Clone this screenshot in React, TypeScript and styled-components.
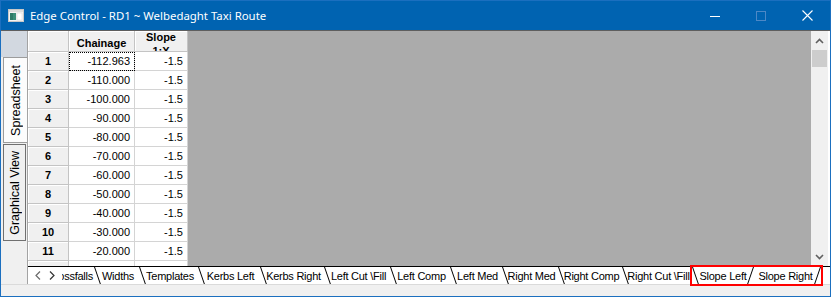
import React from 'react';
import styled, { createGlobalStyle, css } from 'styled-components';

const GlobalStyle = createGlobalStyle`
  html, body {
    margin: 0;
    padding: 0;
    background: #ffffff;
  }
  body {
    font-family: "Liberation Sans", Arial, sans-serif;
  }
`;

const Window = styled.div`
  width: 831px;
  height: 297px;
  box-sizing: border-box;
  border: 1px solid #1b6fbf;
  background: #f0f0f0;
  display: flex;
  flex-direction: column;
  overflow: hidden;
`;

const TitleBar = styled.div`
  height: 29px;
  flex-shrink: 0;
  background: #0063b1;
  display: flex;
  align-items: center;
`;

const AppIcon = styled.svg`
  flex-shrink: 0;
  margin: 0 6px 0 7px;
`;

const TitleText = styled.div`
  flex: 1;
  color: #ffffff;
  font-family: "Noto Sans", "Open Sans", sans-serif;
  font-size: 11.4px;
  white-space: nowrap;
`;

const WinButton = styled.div`
  width: 46px;
  height: 29px;
  display: flex;
  align-items: center;
  justify-content: center;
`;

const Upper = styled.div`
  height: 254px;
  box-sizing: border-box;
  border-top: 1px solid #5e5e5e;
  display: flex;
`;

const SideStrip = styled.div`
  width: 27px;
  flex-shrink: 0;
  box-sizing: border-box;
  border-right: 1px solid #a3a3a3;
  display: flex;
  flex-direction: column;
`;

const SideTop = styled.div`
  height: 26px;
  background: #d2d8e0;
`;

const SideTab = styled.div<{ $active?: boolean; $h: number }>`
  height: ${p => p.$h}px;
  margin-left: 2px;
  box-sizing: border-box;
  display: flex;
  align-items: center;
  justify-content: center;
  ${p =>
    p.$active
      ? css`
          width: 24px;
          background: #fcfcfc;
          border: 1px solid #9c9c9c;
          border-right: none;
        `
      : css`
          width: 23px;
          margin-top: 1px;
          background: #f0f0f0;
          border: 1px solid #707070;
        `}
`;

const SideLabel = styled.span`
  writing-mode: vertical-rl;
  transform: rotate(180deg);
  font-size: 12.5px;
  color: #000;
  white-space: nowrap;
`;

const Main = styled.div`
  flex: 1;
  display: flex;
  flex-direction: column;
  min-width: 0;
`;

const GridArea = styled.div`
  height: 235px;
  display: flex;
  overflow: hidden;
  background: #ababab;
`;

const Sheet = styled.div`
  display: grid;
  grid-template-columns: 41px 66px 53px;
  grid-template-rows: 21px;
  grid-auto-rows: 19px;
  align-content: start;
  background: #ffffff;
  flex-shrink: 0;
`;

type CellKind = 'corner' | 'col' | 'row' | 'data';

const Cell = styled.div<{ $kind: CellKind; $focus?: boolean }>`
  box-sizing: border-box;
  border-right: 1px solid #d4d4d4;
  border-bottom: 1px solid #d4d4d4;
  font-size: 11px;
  color: #000;
  display: flex;
  align-items: center;
  overflow: hidden;
  white-space: nowrap;
  ${p =>
    p.$kind === 'data'
      ? css`
          justify-content: flex-end;
          padding-right: 4px;
          background: #ffffff;
        `
      : css`
          justify-content: center;
          font-weight: bold;
          background: #f0f0f0;
          border-right-color: #c4c4c4;
          border-bottom-color: #c4c4c4;
          box-shadow: inset 1px 1px 0 #ffffff;
        `}
  ${p =>
    p.$kind === 'col' &&
    css`
      padding-top: 3px;
    `}
  ${p =>
    p.$focus &&
    css`
      outline: 1px dotted #000;
      outline-offset: -1px;
    `}
`;

const HeadLines = styled.span`
  display: block;
  flex-shrink: 0;
  text-align: center;
  line-height: 14px;
  padding-top: 2px;
`;

const GreyFill = styled.div`
  flex: 1;
`;

const Scrollbar = styled.div`
  width: 17px;
  flex-shrink: 0;
  border-right: 2px solid #ffffff;
  background: #f0f0f0;
  display: flex;
  flex-direction: column;
`;

const ScrollArrow = styled.div`
  height: 19px;
  display: flex;
  align-items: center;
  justify-content: center;
`;

const Thumb = styled.div`
  height: 17px;
  margin: 0 1px;
  background: #cdcdcd;
`;

const Track = styled.div`
  flex: 1;
`;

const TabBar = styled.div`
  height: 18px;
  box-sizing: border-box;
  border-top: 1px solid #000;
  background: #ffffff;
  display: flex;
`;

const ArrowBox = styled.div`
  width: 34px;
  flex-shrink: 0;
  display: flex;
  align-items: center;
  justify-content: space-around;
  padding: 0 3px;
  box-sizing: border-box;
`;

type Edge = 'left' | 'right' | 'both' | 'none';

const tabPadding: Record<Edge, string> = {
  left: '0 0 0 3px',
  both: '0',
  right: '0 6px 0 2px',
  none: '0 1px 0 0',
};

const Tab = styled.div<{ $w: number; $edge: Edge; $clip?: boolean }>`
  position: relative;
  width: ${p => p.$w}px;
  flex-shrink: 0;
  display: flex;
  align-items: center;
  justify-content: ${p => (p.$clip ? 'flex-end' : 'center')};
  padding: ${p => tabPadding[p.$edge]};
  box-sizing: border-box;
  font-size: 11px;
  letter-spacing: -0.25px;
  color: #000;
  white-space: nowrap;
  overflow: ${p => (p.$clip ? 'hidden' : 'visible')};
  ${p =>
    (p.$edge === 'left' || p.$edge === 'both') &&
    css`
      &::before {
        content: '';
        position: absolute;
        left: 0;
        top: 0;
        bottom: 0;
        border-left: 1px solid #000;
        transform: skewX(19deg);
        transform-origin: top left;
      }
    `}
  ${p =>
    (p.$edge === 'right' || p.$edge === 'both') &&
    css`
      &::after {
        content: '';
        position: absolute;
        right: 0;
        top: 0;
        bottom: 0;
        border-right: 1px solid #000;
        transform: skewX(-19deg);
        transform-origin: top right;
      }
    `}
`;

const Highlight = styled.div`
  display: flex;
  position: relative;
  z-index: 2;
  outline: 2px solid #ff0000;
`;

const BottomStrip = styled.div`
  height: 12px;
  box-sizing: border-box;
  border-top: 1px solid #dadada;
  background: #f0f0f0;
`;

const rows = [
  '-112.963', '-110.000', '-100.000', '-90.000', '-80.000', '-70.000',
  '-60.000', '-50.000', '-40.000', '-30.000', '-20.000', '-10.000',
];

const tabs: { label: string; w: number }[] = [
  { label: 'Widths', w: 45 },
  { label: 'Templates', w: 59 },
  { label: 'Kerbs Left', w: 62 },
  { label: 'Kerbs Right', w: 64 },
  { label: 'Left Cut \\Fill', w: 66 },
  { label: 'Left Comp', w: 60 },
  { label: 'Left Med', w: 52 },
  { label: 'Right Med', w: 56 },
  { label: 'Right Comp', w: 64 },
  { label: 'Right Cut \\Fill', w: 70 },
];

const Chevron = ({ dir }: { dir: 'up' | 'down' }) => (
  <svg width="9" height="6" viewBox="0 0 9 6">
    <path
      d={dir === 'up' ? 'M1 5 L4.5 1.5 L8 5' : 'M1 1 L4.5 4.5 L8 1'}
      fill="none"
      stroke="#606060"
      strokeWidth="1.6"
    />
  </svg>
);

const SideArrow = ({ dir, color }: { dir: 'left' | 'right'; color: string }) => (
  <svg width="6" height="9" viewBox="0 0 6 9">
    <path
      d={dir === 'left' ? 'M5 0.5 L1 4.5 L5 8.5' : 'M1 0.5 L5 4.5 L1 8.5'}
      fill="none"
      stroke={color}
      strokeWidth="1.2"
    />
  </svg>
);

export default function App() {
  return (
    <>
      <GlobalStyle />
      <Window>
        <TitleBar>
          <AppIcon width="16" height="13" viewBox="0 0 16 13">
            <rect x="0.5" y="0.5" width="15" height="12" fill="#f4f4f4" stroke="#c8c8c8" />
            <rect x="1" y="1" width="14" height="2" fill="#dcdcdc" />
            <rect x="2" y="4" width="6" height="7" fill="#3c8f7a" />
            <rect x="2" y="4" width="3" height="7" fill="#2f7b68" />
            <rect x="9" y="4" width="5" height="7" fill="#ffffff" stroke="#d0d0d0" strokeWidth="0.5" />
          </AppIcon>
          <TitleText>Edge Control - RD1 ~ Welbedaght Taxi Route</TitleText>
          <WinButton>
            <svg width="10" height="10" viewBox="0 0 10 10">
              <line x1="0" y1="5.5" x2="10" y2="5.5" stroke="#ffffff" strokeWidth="1" />
            </svg>
          </WinButton>
          <WinButton>
            <svg width="10" height="10" viewBox="0 0 10 10">
              <rect x="0.5" y="0.5" width="9" height="9" fill="none" stroke="#4d88c6" strokeWidth="1" />
            </svg>
          </WinButton>
          <WinButton>
            <svg width="11" height="11" viewBox="0 0 11 11">
              <path d="M0.5 0.5 L10.5 10.5 M10.5 0.5 L0.5 10.5" stroke="#ffffff" strokeWidth="1.1" />
            </svg>
          </WinButton>
        </TitleBar>

        <Upper>
          <SideStrip>
            <SideTop />
            <SideTab $active $h={86}>
              <SideLabel>Spreadsheet</SideLabel>
            </SideTab>
            <SideTab $h={97}>
              <SideLabel>Graphical View</SideLabel>
            </SideTab>
          </SideStrip>

          <Main>
            <GridArea>
              <Sheet>
                <Cell $kind="corner" />
                <Cell $kind="col">Chainage</Cell>
                <Cell $kind="col">
                  <HeadLines>
                    Slope
                    <br />
                    1:X
                  </HeadLines>
                </Cell>
                {rows.map((v, i) => (
                  <React.Fragment key={i}>
                    <Cell $kind="row">{i + 1}</Cell>
                    <Cell $kind="data" $focus={i === 0}>{v}</Cell>
                    <Cell $kind="data">-1.5</Cell>
                  </React.Fragment>
                ))}
              </Sheet>
              <GreyFill />
              <Scrollbar>
                <ScrollArrow>
                  <Chevron dir="up" />
                </ScrollArrow>
                <Thumb />
                <Track />
                <ScrollArrow>
                  <Chevron dir="down" />
                </ScrollArrow>
              </Scrollbar>
            </GridArea>

            <TabBar>
              <ArrowBox>
                <SideArrow dir="left" color="#6a6a6a" />
                <SideArrow dir="right" color="#333333" />
              </ArrowBox>
              <Tab $w={32} $edge="none" $clip>
                Crossfalls
              </Tab>
              {tabs.map(t => (
                <Tab key={t.label} $w={t.w} $edge="left">
                  {t.label}
                </Tab>
              ))}
              <Highlight>
                <Tab $w={62} $edge="both">
                  Slope Left
                </Tab>
                <Tab $w={67} $edge="right">
                  Slope Right
                </Tab>
              </Highlight>
            </TabBar>
          </Main>
        </Upper>
        <BottomStrip />
      </Window>
    </>
  );
}
